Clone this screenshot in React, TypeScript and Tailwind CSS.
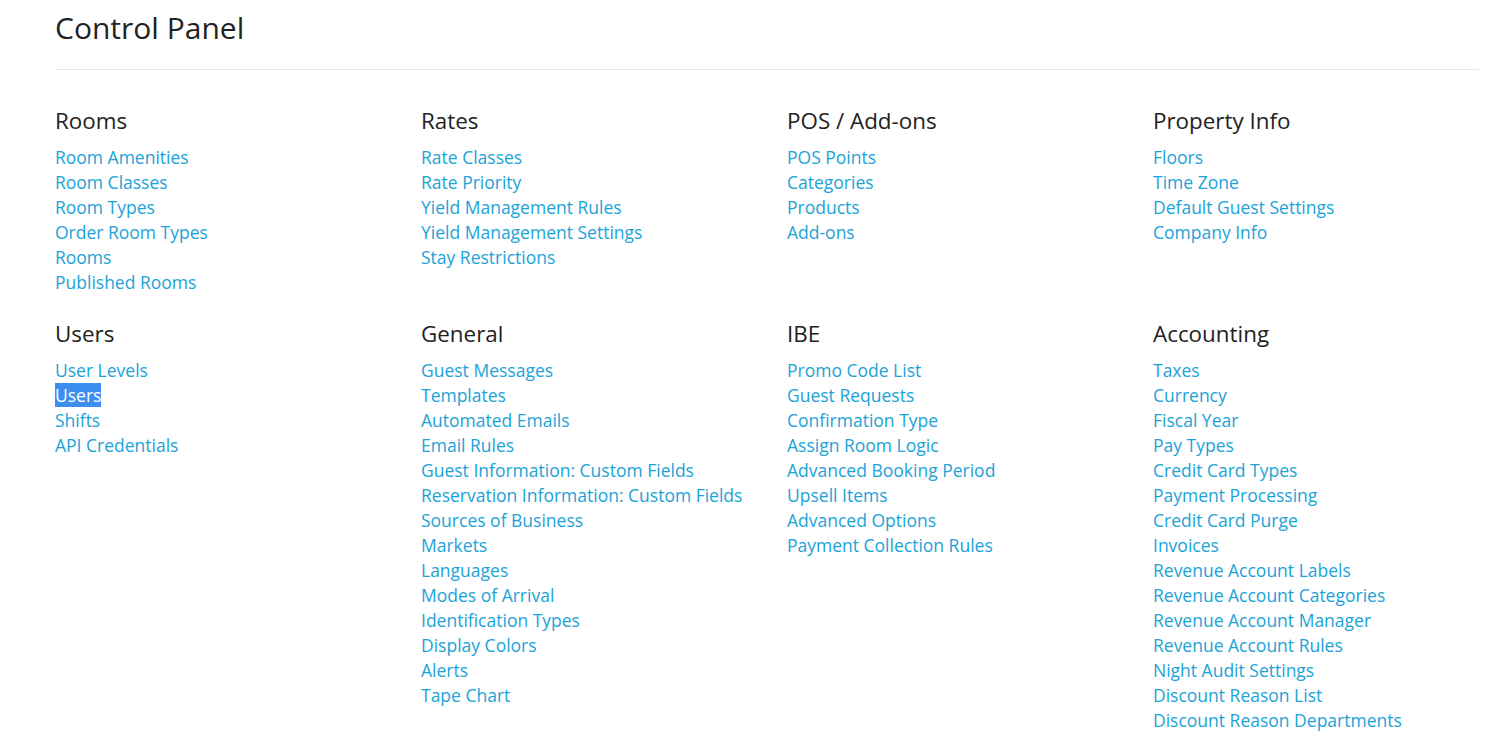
const SECTIONS = [
  {
    title: "Rooms",
    links: ["Room Amenities", "Room Classes", "Room Types", "Order Room Types", "Rooms", "Published Rooms"],
  },
  {
    title: "Rates",
    links: ["Rate Classes", "Rate Priority", "Yield Management Rules", "Yield Management Settings", "Stay Restrictions"],
  },
  {
    title: "POS / Add-ons",
    links: ["POS Points", "Categories", "Products", "Add-ons"],
  },
  {
    title: "Property Info",
    links: ["Floors", "Time Zone", "Default Guest Settings", "Company Info"],
  },
  {
    title: "Users",
    links: ["User Levels", "Users", "Shifts", "API Credentials"],
  },
  {
    title: "General",
    links: [
      "Guest Messages",
      "Templates",
      "Automated Emails",
      "Email Rules",
      "Guest Information: Custom Fields",
      "Reservation Information: Custom Fields",
      "Sources of Business",
      "Markets",
      "Languages",
      "Modes of Arrival",
      "Identification Types",
      "Display Colors",
      "Alerts",
      "Tape Chart",
    ],
  },
  {
    title: "IBE",
    links: [
      "Promo Code List",
      "Guest Requests",
      "Confirmation Type",
      "Assign Room Logic",
      "Advanced Booking Period",
      "Upsell Items",
      "Advanced Options",
      "Payment Collection Rules",
    ],
  },
  {
    title: "Accounting",
    links: [
      "Taxes",
      "Currency",
      "Fiscal Year",
      "Pay Types",
      "Credit Card Types",
      "Payment Processing",
      "Credit Card Purge",
      "Invoices",
      "Revenue Account Labels",
      "Revenue Account Categories",
      "Revenue Account Manager",
      "Revenue Account Rules",
      "Night Audit Settings",
      "Discount Reason List",
      "Discount Reason Departments",
    ],
  },
];

export default function App() {
  return (
    <div className="min-h-screen bg-white pl-[55px] pr-[14px] font-['Open_Sans',sans-serif]">
      <h1 className="pt-[11px] text-[30px] leading-[33px] text-[#222]">Control Panel</h1>
      <hr className="mt-[25px] border-t border-[#e6e6e6]" />

      {/* sections */}
      <div className="mt-[39px] grid grid-cols-[366px_366px_366px_366px] gap-y-[27px]">
        {SECTIONS.map((s) => (
          <div key={s.title}>
            <h3 className="text-[22.4px] leading-[24px] text-[#222]">{s.title}</h3>
            <ul className="mt-[12px]">
              {s.links.map((l) => (
                <li key={l} className="text-[17.5px] leading-[25px] text-[#1ba3d8]">
                  {s.title === "Users" && l === "Users" ? (
                    <a className="bg-[#3c8ef0] text-white">{l}</a>
                  ) : (
                    <a className="cursor-pointer hover:underline">{l}</a>
                  )}
                </li>
              ))}
            </ul>
          </div>
        ))}
      </div>
    </div>
  );
}
